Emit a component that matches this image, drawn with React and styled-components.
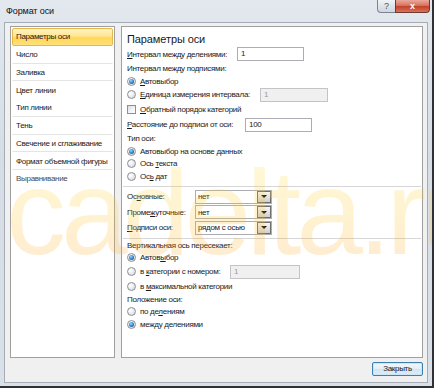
import React from "react";
import styled, { createGlobalStyle } from "styled-components";

const GlobalStyle = createGlobalStyle`
  html, body {
    margin: 0;
    padding: 0;
    background: #ffffff;
  }
  body {
    font-family: "Liberation Sans", Arial, sans-serif;
    color: #1a1a1a;
  }
  u {
    text-decoration-thickness: 1px;
    text-underline-offset: 1px;
  }
`;

const Window = styled.div`
  position: relative;
  width: 434px;
  height: 388px;
  box-sizing: border-box;
  display: flex;
  flex-direction: column;
  overflow: hidden;
  background: linear-gradient(180deg, #e3e8ee 0%, #d6dde5 40%, #d9e0e7 100%);
  border-right: 2px solid #2e3236;
  border-bottom: 2px solid #2e3236;
`;

const TitleBar = styled.div`
  height: 22px;
  flex-shrink: 0;
  display: flex;
  align-items: flex-start;
  padding: 0 2px 0 6px;
`;

const Title = styled.div`
  font-size: 9px;
  line-height: 22px;
  color: #111;
  letter-spacing: -0.1px;
`;

const Caption = styled.div`
  margin-left: auto;
  display: flex;
`;

const HelpBtn = styled.div`
  width: 18px;
  height: 13px;
  box-sizing: border-box;
  border: 1px solid #7b8591;
  border-top: none;
  border-right: none;
  border-bottom-left-radius: 4px;
  background: linear-gradient(180deg, #f1f4f7 0%, #dde3e9 50%, #cfd6de 100%);
  color: #4a5563;
  font-size: 9px;
  line-height: 12px;
  text-align: center;
`;

const CloseBtn = styled.div`
  width: 35px;
  height: 13px;
  box-sizing: border-box;
  border: 1px solid #6e3b32;
  border-top: none;
  border-bottom-right-radius: 4px;
  background: linear-gradient(180deg, #e9a99b 0%, #d9735f 45%, #c3422b 55%, #d8735c 100%);
  color: #fff;
  font-size: 9px;
  font-weight: bold;
  line-height: 12px;
  text-align: center;
`;

const Frame = styled.div`
  flex: 1;
  display: flex;
  padding: 0 4px 3px 4px;
  min-height: 0;
`;

const Body = styled.div`
  flex: 1;
  display: flex;
  flex-direction: column;
  background: #f0f0f0;
  border: 1px solid #a4adb7;
  padding: 3px 4px 6px 5px;
`;

const Panels = styled.div`
  display: flex;
  gap: 6px;
  height: 332px;
`;

const NavPanel = styled.div`
  width: 105px;
  box-sizing: border-box;
  background: #fff;
  border: 1px solid #a0a0a0;
  padding-top: 1px;
`;

const NavItem = styled.div`
  height: 17.75px;
  box-sizing: border-box;
  margin: 0 1px;
  padding-left: 3px;
  display: flex;
  align-items: center;
  font-size: 8px;
  letter-spacing: -0.3px;
  white-space: nowrap;
  color: ${(p) => (p.$dim ? "#3f4a5c" : "#1a1a1a")};
  border: 1px solid ${(p) => (p.$active ? "#e5b74d" : "transparent")};
  border-bottom-color: ${(p) =>
    p.$active ? "#e5b74d" : p.$sep ? "#e4e4e4" : "transparent"};
  border-radius: ${(p) => (p.$active ? "2px" : "0")};
  background: ${(p) =>
    p.$active
      ? "linear-gradient(180deg, #fff3c4 0%, #ffe690 45%, #ffd758 55%, #ffe07a 100%)"
      : "transparent"};
`;

const ContentPanel = styled.div`
  width: 302px;
  box-sizing: border-box;
  background: #fff;
  border: 1px solid #a0a0a0;
  padding-top: 4px;
  display: flex;
  flex-direction: column;
`;

const Heading = styled.div`
  height: 15px;
  display: flex;
  align-items: center;
  padding-left: 5px;
  font-size: 11px;
  letter-spacing: -0.1px;
  color: #1a1a1a;
`;

const Row = styled.div`
  height: ${(p) => p.$h}px;
  flex-shrink: 0;
  display: flex;
  align-items: center;
  padding-left: 5px;
  font-size: 8px;
  letter-spacing: -0.3px;
  white-space: nowrap;
`;

const Label = styled.div`
  width: ${(p) => p.$w}px;
  flex-shrink: 0;
`;

const Radio = styled.span`
  width: 9px;
  height: 9px;
  box-sizing: border-box;
  border-radius: 50%;
  border: 1px solid #8b9097;
  background: radial-gradient(circle at 35% 35%, #ffffff 0%, #e4e6e9 60%, #c9ccd0 100%);
  display: flex;
  align-items: center;
  justify-content: center;
  flex-shrink: 0;
  margin-right: 4px;

  &::after {
    content: "";
    width: 5px;
    height: 5px;
    border-radius: 50%;
    background: ${(p) =>
      p.$on
        ? "radial-gradient(circle at 40% 35%, #9ad6ff 0%, #2a7fc4 55%, #0d3e70 100%)"
        : "transparent"};
  }
`;

const Check = styled.span`
  width: 9px;
  height: 9px;
  box-sizing: border-box;
  border: 1px solid #8b9097;
  background: linear-gradient(135deg, #d9dce0 0%, #f4f5f6 60%, #ffffff 100%);
  flex-shrink: 0;
  margin-right: 4px;
`;

const TextBox = styled.div`
  width: ${(p) => p.$w}px;
  height: 14px;
  box-sizing: border-box;
  border: 1px solid ${(p) => (p.$disabled ? "#c2c4c8" : "#abadb3")};
  background: ${(p) => (p.$disabled ? "#f0f0f0" : "#fff")};
  color: ${(p) => (p.$disabled ? "#9a9a9a" : "#1a1a1a")};
  padding-left: 3px;
  line-height: 12px;
  font-size: 8px;
`;

const Select = styled.div`
  width: 77px;
  height: 14px;
  box-sizing: border-box;
  border: 1px solid #abadb3;
  background: #fff;
  display: flex;
  align-items: center;
  padding-left: 2px;
`;

const Arrow = styled.span`
  margin-left: auto;
  width: 14px;
  height: 12px;
  box-sizing: border-box;
  border: 1px solid #6f6f6f;
  background: linear-gradient(180deg, #f6f6f6 0%, #e2e2e2 50%, #cfcfcf 100%);
  display: flex;
  align-items: center;
  justify-content: center;

  &::after {
    content: "";
    border-left: 3px solid transparent;
    border-right: 3px solid transparent;
    border-top: 3px solid #111;
  }
`;

const Separator = styled.div`
  height: 1px;
  flex-shrink: 0;
  background: #d6d6d6;
  margin: ${(p) => p.$mt}px 1px ${(p) => p.$mb}px 1px;
`;

const Footer = styled.div`
  margin-top: 4px;
  display: flex;
  justify-content: flex-end;
`;

const Button = styled.div`
  width: 51px;
  height: 14px;
  box-sizing: border-box;
  border: 1px solid #3c7fb1;
  border-radius: 2px;
  background: linear-gradient(180deg, #f2f8fc 0%, #e3eef7 50%, #d3e4f1 51%, #dfecf6 100%);
  box-shadow: inset 0 0 0 1px #c8e6fa;
  font-size: 8px;
  letter-spacing: -0.3px;
  line-height: 12px;
  text-align: center;
  color: #1a1a1a;
`;

const Watermark = styled.div`
  position: absolute;
  left: 6px;
  top: 152px;
  font-family: "Liberation Sans", Arial, sans-serif;
  font-size: 120px;
  line-height: 1;
  letter-spacing: -5px;
  white-space: nowrap;
  pointer-events: none;
  background: linear-gradient(180deg, #ffe23a 0%, #ffc21a 55%, #ff9a20 100%);
  -webkit-background-clip: text;
  background-clip: text;
  color: transparent;
  opacity: 0.2;
`;

const navItems = [
  { text: "Параметры оси", active: true },
  { text: "Число", sep: true },
  { text: "Заливка", sep: true },
  { text: "Цвет линии" },
  { text: "Тип линии", sep: true },
  { text: "Тень", sep: true },
  { text: "Свечение и сглаживание", sep: true },
  { text: "Формат объемной фигуры", sep: true },
  { text: "Выравнивание", dim: true },
];

export default function App() {
  return (
    <>
      <GlobalStyle />
      <Window>
        <TitleBar>
          <Title>Формат оси</Title>
          <Caption>
            <HelpBtn>?</HelpBtn>
            <CloseBtn>x</CloseBtn>
          </Caption>
        </TitleBar>
        <Frame>
          <Body>
            <Panels>
              <NavPanel>
                {navItems.map((item) => (
                  <NavItem
                    key={item.text}
                    $active={item.active}
                    $sep={item.sep}
                    $dim={item.dim}
                  >
                    {item.text}
                  </NavItem>
                ))}
              </NavPanel>
              <ContentPanel>
                <Heading>Параметры оси</Heading>
                <Row $h={16}>
                  <Label $w={110}>
                    <u>И</u>нтервал между делениями:
                  </Label>
                  <TextBox $w={67}>1</TextBox>
                </Row>
                <Row $h={13}>Интервал между подписями:</Row>
                <Row $h={12}>
                  <Radio $on />
                  <span>
                    <u>А</u>втовыбор
                  </span>
                </Row>
                <Row $h={15}>
                  <Radio />
                  <Label $w={120}>
                    <u>Е</u>диница измерения интервала:
                  </Label>
                  <TextBox $w={68} $disabled>
                    1
                  </TextBox>
                </Row>
                <Row $h={15}>
                  <Check />
                  <span>
                    <u>О</u>братный порядок категорий
                  </span>
                </Row>
                <Row $h={15}>
                  <Label $w={118}>
                    <u>Р</u>асстояние до подписи от оси:
                  </Label>
                  <TextBox $w={67}>100</TextBox>
                </Row>
                <Row $h={13}>Тип оси:</Row>
                <Row $h={12}>
                  <Radio $on />
                  <span>Автовыбор на основе данных</span>
                </Row>
                <Row $h={13}>
                  <Radio />
                  <span>
                    Ось <u>т</u>екста
                  </span>
                </Row>
                <Row $h={13}>
                  <Radio />
                  <span>
                    Ос<u>ь</u> дат
                  </span>
                </Row>
                <Separator $mt={3} $mb={2} />
                <Row $h={15}>
                  <Label $w={68}>
                    Ос<u>н</u>овные:
                  </Label>
                  <Select>
                    нет
                    <Arrow />
                  </Select>
                </Row>
                <Row $h={16}>
                  <Label $w={68}>
                    Проме<u>ж</u>уточные:
                  </Label>
                  <Select>
                    нет
                    <Arrow />
                  </Select>
                </Row>
                <Row $h={15}>
                  <Label $w={68}>
                    <u>П</u>одписи оси:
                  </Label>
                  <Select>
                    рядом с осью
                    <Arrow />
                  </Select>
                </Row>
                <Separator $mt={3} $mb={1} />
                <Row $h={10}>Вертикальная ось пересекает:</Row>
                <Row $h={14}>
                  <Radio $on />
                  <span>
                    Автов<u>ы</u>бор
                  </span>
                </Row>
                <Row $h={15}>
                  <Radio />
                  <Label $w={90}>
                    в <u>к</u>атегории с номером:
                  </Label>
                  <TextBox $w={70} $disabled>
                    1
                  </TextBox>
                </Row>
                <Row $h={14}>
                  <Radio />
                  <span>
                    в <u>м</u>аксимальной категории
                  </span>
                </Row>
                <Row $h={12}>Положение оси:</Row>
                <Row $h={13}>
                  <Radio />
                  <span>
                    по де<u>л</u>ениям
                  </span>
                </Row>
                <Row $h={12}>
                  <Radio $on />
                  <span>
                    между <u>д</u>елениями
                  </span>
                </Row>
              </ContentPanel>
            </Panels>
            <Footer>
              <Button>Закрыть</Button>
            </Footer>
          </Body>
        </Frame>
        <Watermark>cadelta.ru</Watermark>
      </Window>
    </>
  );
}
